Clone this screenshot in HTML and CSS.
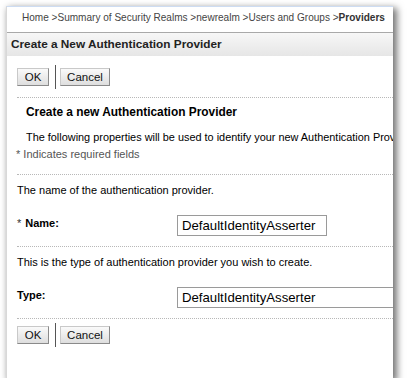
FILE: index.html
```html
<!DOCTYPE html>
<html lang="en">

<head>
  <meta charset="UTF-8">
  <title>Create a New Authentication Provider</title>
  <link rel="stylesheet" href="styles.css">
</head>

<body>
  <div class="window">
    <div class="crumbs">Home &gt;Summary of Security Realms &gt;newrealm &gt;Users and Groups &gt;<b>Providers</b></div>
    <div class="header">Create a New Authentication Provider</div>

    <div class="toolbar top">
      <button class="btn ok">OK</button>
      <span class="sep"></span>
      <button class="btn cancel">Cancel</button>
    </div>

    <div class="intro">
      <div class="intro-title">Create a new Authentication Provider</div>
      <div class="intro-text">The following properties will be used to identify your new Authentication Provider.</div>
    </div>
    <div class="required">* Indicates required fields</div>

    <div class="section">
      <div class="help">The name of the authentication provider.</div>
      <div class="field">
        <label class="label"><span class="star">*</span>Name:</label>
        <input class="input name" type="text" value="DefaultIdentityAsserter">
      </div>
    </div>

    <div class="section">
      <div class="help">This is the type of authentication provider you wish to create.</div>
      <div class="field">
        <label class="label">Type:</label>
        <input class="input type" type="text" value="DefaultIdentityAsserter">
      </div>
    </div>

    <div class="toolbar bottom">
      <button class="btn ok">OK</button>
      <span class="sep"></span>
      <button class="btn cancel">Cancel</button>
    </div>
  </div>
</body>

</html>
```

FILE: styles.css
```css
body {
  margin: 0;
  background: #fff;
  font-family: "Liberation Sans", Arial, sans-serif;
  font-size: 11px;
  color: #000;
}

.window {
  margin: 6px 0 0 6px;
  width: 387px;
  height: 372px;
  box-sizing: border-box;
  overflow: hidden;
  background: #fff;
  border-top: 1px solid #cddcf2;
  border-left: 1px solid #d8d8d8;
  box-shadow: 3px 3px 7px 1px rgba(0, 0, 0, 0.55);
}

.crumbs {
  height: 25px;
  line-height: 21px;
  padding-left: 15px;
  white-space: nowrap;
  color: #444;
  font-size: 10.05px;
}

.crumbs b {
  color: #333;
}

.header {
  height: 23px;
  line-height: 22px;
  padding-left: 4px;
  border-top: 1px solid #a9a9a9;
  background: linear-gradient(#f7f7f7, #e6e6e6);
  font-weight: bold;
  font-size: 11.8px;
  color: #222;
  white-space: nowrap;
}

.toolbar {
  display: flex;
  align-items: center;
  margin-left: 10px;
}

.toolbar.top {
  height: 41px;
  border-bottom: 1px dotted #b8b8b8;
}

.toolbar.bottom {
  height: 31px;
  border-top: 1px dotted #b8b8b8;
}

.btn {
  height: 18px;
  padding: 0 5px;
  border: 1px solid #8a8a8a;
  border-top-color: #c9c9c9;
  border-left-color: #c9c9c9;
  background: linear-gradient(#fafafa, #dedede);
  font-family: "Liberation Sans", Arial, sans-serif;
  font-size: 11.5px;
  color: #111;
}

.btn.ok {
  width: 32px;
}

.btn.cancel {
  width: 50px;
}

.sep {
  width: 1px;
  height: 24px;
  margin: 0 4px 0 6px;
  background: #555;
}

.intro {
  padding: 6px 0 0 19px;
  white-space: nowrap;
}

.intro-title {
  height: 26px;
  line-height: 16px;
  font-weight: bold;
  font-size: 11.9px;
}

.intro-text {
  height: 18px;
  line-height: 14px;
  font-size: 10.9px;
}

.required {
  height: 26px;
  line-height: 12px;
  padding-left: 9px;
  color: #555;
}

.section {
  margin-left: 10px;
  border-top: 1px dotted #b8b8b8;
}

.help {
  height: 30px;
  line-height: 30px;
  white-space: nowrap;
}

.field {
  display: flex;
  align-items: center;
  height: 41px;
}

.label {
  flex: none;
  width: 160px;
  font-weight: bold;
  margin-top: -6px;
}

.star {
  font-weight: normal;
  color: #333;
  margin-right: 4px;
}

.input {
  flex: none;
  box-sizing: border-box;
  height: 21px;
  border: 1px solid #9a9a9a;
  padding: 0 4px;
  font-family: "Liberation Sans", Arial, sans-serif;
  font-size: 13.2px;
  color: #000;
  margin-top: -1px;
}

.input.name {
  width: 150px;
}

.input.type {
  width: 260px;
}
```
